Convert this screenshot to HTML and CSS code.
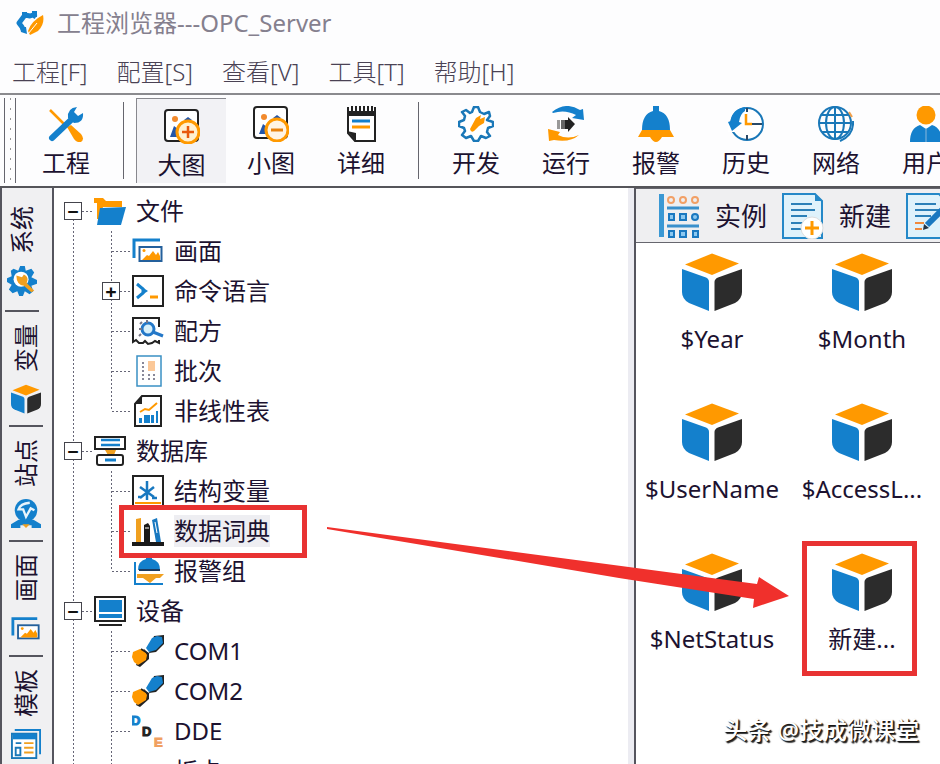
FILE: index.html
```html
<!DOCTYPE html>
<html lang="zh-CN">
<head>
    <meta charset="UTF-8">
    <meta name="viewport" content="width=device-width, initial-scale=1.0">
    <title>工程浏览器---OPC_Server</title>
    <link rel="stylesheet" href="styles.css">
</head>
<body>
    <!-- 图标定义 -->
    <svg class="defs" aria-hidden="true">
        <symbol id="cube" viewBox="0 0 60 58">
            <path fill="#f90" d="M30 0.500 57 10.500 30 22 3 11.500Z"/>
            <path fill="#1480cc" d="M0 16 24 24.500Q27 26 27 29V58L7 50Q0 46 0 39Z"/>
            <path fill="#2c2c2c" d="M60 16 36 24.500Q32.500 26 32.500 29V58L53 50Q60 46 60 39Z"/>
        </symbol>
        <symbol id="pictures" viewBox="0 0 32 32">
            <path fill="none" stroke="#1480cc" stroke-width="3" d="M2 23V5H28"/>
            <rect x="7.500" y="12" width="22" height="14" fill="#fff" stroke="#24609c" stroke-width="2"/>
            <path fill="#f90" d="M10 25 15 20 17 21 21 16 24 20 26 17 28 21V25Z"/>
            <circle cx="12" cy="15.500" r="1.500" fill="#f90"/>
        </symbol>
        <symbol id="com" viewBox="0 0 32 32">
            <path fill="#222" d="M22 1 32 0 32 9 24 17 17 18Z"/>
            <path fill="#1480cc" d="M20 3 25 1 30 2 31 8 24 15 17 17 14 13Z"/>
            <path fill="#222" d="M12 14 17 19V24L8 32 4 30Z"/>
            <path fill="#f90" d="M1 17 8 14 12 15 15 20 14 25 6 30 2 27 0 22Z"/>
            <path stroke="#222" stroke-width="1.500" d="M9 14 17 19"/>
        </symbol>
    </svg>

    <header class="title-bar">
        <svg class="logo" viewBox="0 0 28 24" aria-hidden="true">
            <path fill="none" stroke="#1480cc" stroke-width="5" stroke-linejoin="round" d="M20 6 17 4 14 5 9 4 6 8 3 12 6 16 8 20"/>
            <path fill="#1480cc" d="M6 1H11V5H6ZM16 0H21V6H16ZM4 16 10 16 11 23 5 21Z"/>
            <path fill="#f90" d="M27 4Q29 13 22 20L14 24 12 20Q15 10 27 4Z"/>
            <path stroke="#fff" d="M12 23 21 12"/>
        </svg>
        <h1 class="title">工程浏览器---OPC_Server</h1>
    </header>

    <nav class="menu">
        <button class="menu-item">工程[F]</button>
        <button class="menu-item">配置[S]</button>
        <button class="menu-item">查看[V]</button>
        <button class="menu-item">工具[T]</button>
        <button class="menu-item">帮助[H]</button>
    </nav>

    <!-- 工具栏 -->
    <div class="toolbar">
        <span class="grip"></span>
        <button class="tool">
            <svg class="tool-icon" viewBox="0 0 36 36" aria-hidden="true">
                <path stroke="#f90" stroke-width="2.500" d="M2 4 18 20"/>
                <path fill="#f90" d="M19 21 23 19 33 28Q37 33 33 36Q29 37 26 33Z"/>
                <path fill="none" stroke="#1480cc" stroke-width="6" stroke-linecap="round" d="M4 32 24 13"/>
                <path fill="#1480cc" d="M20 12Q19 2 29 1L26 6 30 10 35 7Q36 17 26 17Z"/>
            </svg>
            <span>工程</span>
        </button>
        <span class="separator"></span>
        <button class="tool pressed">
            <svg class="tool-icon" viewBox="0 0 36 36" aria-hidden="true">
                <rect x="1" y="2" width="33" height="31" rx="3" fill="#fff" stroke="#222" stroke-width="2"/>
                <circle cx="11" cy="11" r="3" fill="#f28a2c"/>
                <path fill="#2456a8" d="M6 29 10 18 14 21 13 29ZM20 12 24 9 28 12Z"/>
                <circle cx="24" cy="24" r="11" fill="#fff0d0" stroke="#f90" stroke-width="3"/>
                <path stroke="#e8590c" stroke-width="2.500" d="M24 18V30M18 24H30"/>
            </svg>
            <span>大图</span>
        </button>
        <button class="tool">
            <svg class="tool-icon" viewBox="0 0 36 36" aria-hidden="true">
                <rect x="1" y="1" width="33" height="31" rx="3" fill="#fff" stroke="#222" stroke-width="2"/>
                <circle cx="11" cy="11" r="3" fill="#f28a2c"/>
                <path fill="#2456a8" d="M6 28 10 18 14 21 13 28ZM20 12 24 9 28 12Z"/>
                <circle cx="24" cy="24" r="11" fill="#fff4e4" stroke="#f90" stroke-width="3"/>
                <path stroke="#e8820c" stroke-width="3" d="M18 24H30"/>
            </svg>
            <span>小图</span>
        </button>
        <button class="tool">
            <svg class="tool-icon" viewBox="0 0 36 36" aria-hidden="true">
                <path fill="#fff" stroke="#222" stroke-width="2" d="M5 8V27L12 35H32V8Z"/>
                <path fill="#222" d="M4 5H33V10H4ZM4 25 13 27V35Z"/>
                <path stroke="#222" stroke-width="2" d="M5 1V6M9 0V6M13 0V6M17 0V6M21 0V6M25 0V6M29 0V6M32 1V6"/>
                <path stroke="#1480cc" stroke-width="3" d="M9 15H27"/>
                <path stroke="#f90" stroke-width="3" d="M9 21H27"/>
            </svg>
            <span>详细</span>
        </button>
        <span class="separator"></span>
        <button class="tool">
            <svg class="tool-icon" viewBox="0 0 36 36" aria-hidden="true">
                <path fill="#fff" stroke="#1a78b8" stroke-width="2.500" stroke-linejoin="round" d="M14 6 16 1H20L22 6 26 8 31 6 32 10 29 14 35 16V20L30 22 29 26 32 30 28 32 23 30 20 35H16L13 30 8 32 4 29 7 25 6 22 1 20V16L6 14 7 10 4 6 8 4 12 7Z"/>
                <path fill="#f90" d="M18 12 23 9 22 13 27 11 26 17 21 20 16 25Q13 27 12 23Z"/>
            </svg>
            <span>开发</span>
        </button>
        <button class="tool">
            <svg class="tool-icon" viewBox="0 0 36 36" aria-hidden="true">
                <path fill="#1480cc" d="M4 6Q18-5 32 4L35 3 36 14 24 12 28 9Q17 3 5 7Z"/>
                <path fill="#f90" d="M0 23 12 26 10 29Q20 34 31 29 22 37 6 34L1 35Z"/>
                <path fill="#999" d="M9 14H12V23H9Z"/>
                <path fill="#666" d="M13 14H17V23H13Z"/>
                <path fill="#222" d="M17 14H20V11L27 18 20 26V23H17Z"/>
            </svg>
            <span>运行</span>
        </button>
        <button class="tool">
            <svg class="tool-icon" viewBox="0 0 36 36" aria-hidden="true">
                <path fill="#1480cc" d="M15 0H21V5Q32 8 32 24H4Q4 8 15 5Z"/>
                <path fill="#f90" d="M4 24H32L36 31H24Q18 41 12 31H0Z"/>
            </svg>
            <span>报警</span>
        </button>
        <button class="tool">
            <svg class="tool-icon" viewBox="0 0 36 36" aria-hidden="true">
                <circle cx="19" cy="18" r="16" fill="#fff" stroke="#1a78b8" stroke-width="2"/>
                <path fill="#fff" d="M0 19H8V26H0Z"/>
                <path fill="#1480cc" d="M17 1Q4 3 3 15L0 16 4 25 14 17 11 16Q12 8 17 5Z"/>
                <path fill="none" stroke="#f90" stroke-width="2.500" d="M18 8V18H24"/>
                <path stroke="#2a4a68" stroke-width="2" d="M24 18H34M19 29V34M19 2V6"/>
            </svg>
            <span>历史</span>
        </button>
        <button class="tool">
            <svg class="tool-icon" viewBox="0 0 36 36" aria-hidden="true">
                <g fill="none" stroke="#1a78b8" stroke-width="2">
                    <circle cx="17" cy="17" r="16"/>
                    <ellipse cx="17" cy="17" rx="9" ry="16"/>
                    <path d="M17 1V33M1 17H33M4 9H30M4 26H30M35 15Q36 29 22 35"/>
                </g>
                <path fill="none" stroke="#f2a04a" stroke-width="2" d="M31 6 34 11"/>
            </svg>
            <span>网络</span>
        </button>
        <button class="tool">
            <svg class="tool-icon" viewBox="0 0 36 36" aria-hidden="true">
                <circle cx="18" cy="9" r="9.500" fill="#f90"/>
                <path fill="#1480cc" d="M2 36Q2 22 12 19L18 23 24 19Q34 22 34 36Z"/>
                <path stroke="#8ab8dc" d="M18 22V36"/>
            </svg>
            <span>用户</span>
        </button>
    </div>

    <div class="workspace">
        <!-- 左侧竖排标签 -->
        <nav class="side-tabs">
            <button class="side-tab">
                <span class="side-label">系统</span>
                <svg class="side-icon" viewBox="0 0 32 32" aria-hidden="true">
                    <path fill="#1480cc" d="M12 5 14 0H19L20 5 26 3 29 7 26 12 32 15V19L26 21 28 27 24 30 19 27 17 32H13L11 27 6 29 2 25 5 20 0 17V13L5 11 4 5 7 3Z"/>
                    <circle cx="15" cy="14" r="8" fill="#fff"/>
                    <path fill="#f0a020" d="M10 10 16 12 18 9Q24 12 21 18L29 26 26 28 18 21Q10 20 10 10Z"/>
                </svg>
            </button>
            <button class="side-tab">
                <span class="side-label">变量</span>
                <svg class="side-icon" aria-hidden="true"><use href="#cube"/></svg>
            </button>
            <button class="side-tab">
                <span class="side-label">站点</span>
                <svg class="side-icon" viewBox="0 0 32 32" aria-hidden="true">
                    <path fill="#1480cc" d="M0 31V27L8 22H24L32 27V31H22V28H10V31Z"/>
                    <circle cx="16" cy="12" r="12" fill="#1480cc"/>
                    <path fill="none" stroke="#e8f4fc" stroke-width="2.500" d="M20 4Q10 5 8 11L13 11 16 19 21 10 25 12"/>
                    <path fill="#f0a020" d="M12 27H20L16 31Z"/>
                </svg>
            </button>
            <button class="side-tab">
                <span class="side-label">画面</span>
                <svg class="side-icon" aria-hidden="true"><use href="#pictures"/></svg>
            </button>
            <button class="side-tab">
                <span class="side-label">模板</span>
                <svg class="side-icon" viewBox="0 0 32 32" aria-hidden="true">
                    <path fill="none" stroke="#1480cc" stroke-width="2" d="M4 1H31V27"/>
                    <rect x="1" y="5" width="26" height="26" fill="#fff" stroke="#1a78b8" stroke-width="2"/>
                    <path fill="#1480cc" d="M2 5H27V11H2Z"/>
                    <path fill="none" stroke="#1a78b8" stroke-width="2" d="M5 20H10V28H5ZM5 15H11"/>
                    <path stroke="#f0a020" stroke-width="2" d="M14 15H24M14 20H24M14 25H24"/>
                </svg>
            </button>
        </nav>

        <!-- 工程树 -->
        <div class="tree-panel">
            <ul class="tree">
                <li>
                    <div class="node">
                        <button class="expander" aria-label="折叠文件">−</button>
                        <span class="dots"></span>
                        <svg class="node-icon" viewBox="0 0 32 32" aria-hidden="true">
                            <path fill="#f90" d="M0 3H9L12 6H28V12H9L5 24H3V8H0Z"/>
                            <path fill="#1480cc" d="M6 13 32 12 27 30H3Z"/>
                        </svg>
                        <span class="node-label">文件</span>
                    </div>
                    <ul class="branch">
                        <li class="node">
                            <span class="dots long"></span>
                            <svg class="node-icon" aria-hidden="true"><use href="#pictures"/></svg>
                            <span class="node-label">画面</span>
                        </li>
                        <li class="node">
                            <button class="expander" aria-label="展开命令语言">+</button>
                            <span class="dots"></span>
                            <svg class="node-icon" viewBox="0 0 32 32" aria-hidden="true">
                                <rect x="1" y="1" width="30" height="30" fill="#fff" stroke="#222" stroke-width="2"/>
                                <path fill="none" stroke="#1480cc" stroke-width="3" d="M5 9 11 14V18L5 23"/>
                                <path fill="#1480cc" d="M10 12 16 16 10 20Z"/>
                                <path stroke="#f90" stroke-width="3" d="M18 22H26"/>
                            </svg>
                            <span class="node-label">命令语言</span>
                        </li>
                        <li class="node">
                            <span class="dots long"></span>
                            <svg class="node-icon" viewBox="0 0 32 32" aria-hidden="true">
                                <path fill="none" stroke="#222" stroke-width="2" d="M27 12V3H1V27L4 25 7 28 11 28 13 26 16 29 20 28 23 26 27 28V25"/>
                                <circle cx="16" cy="14" r="6" fill="#d8f0fa" stroke="#2478c8" stroke-width="3"/>
                                <path stroke="#2478c8" stroke-width="3" d="M21 17 31 21"/>
                                <path stroke="#778" stroke-width="2" d="M10 7 8 9M9 19 7 21M7 14H10M15 5V8"/>
                            </svg>
                            <span class="node-label">配方</span>
                        </li>
                        <li class="node">
                            <span class="dots long"></span>
                            <svg class="node-icon" viewBox="0 0 32 32" aria-hidden="true">
                                <rect x="5" y="1" width="24" height="30" fill="#fff" stroke="#3a90c4" stroke-width="1.500"/>
                                <path fill="#fbc898" d="M16 6H23V16H16Z"/>
                                <path stroke="#889" stroke-width="2" stroke-dasharray="2 2" d="M11 7V26M17 19V26M22 19V26"/>
                            </svg>
                            <span class="node-label">批次</span>
                        </li>
                        <li class="node">
                            <span class="dots long"></span>
                            <svg class="node-icon" viewBox="0 0 32 32" aria-hidden="true">
                                <path fill="#fff" stroke="#222" stroke-width="2" d="M10 1H29V31H3V9Z"/>
                                <path fill="#222" d="M10 1V9H3Z"/>
                                <path fill="none" stroke="#f90" stroke-width="2" d="M8 17 13 14 17 15 25 8"/>
                                <path fill="#1480cc" d="M7 23H10V28H7ZM12 20H18V28H12ZM19 20H22V28H19ZM24 16H26V28H24Z"/>
                            </svg>
                            <span class="node-label">非线性表</span>
                        </li>
                    </ul>
                </li>
                <li>
                    <div class="node">
                        <button class="expander" aria-label="折叠数据库">−</button>
                        <span class="dots"></span>
                        <svg class="node-icon" viewBox="0 0 32 32" aria-hidden="true">
                            <rect x="1" y="2" width="30" height="12" fill="#fff" stroke="#222" stroke-width="2"/>
                            <path stroke="#1480cc" stroke-width="2.500" d="M7 5H26M7 10H26"/>
                            <path fill="#f0a020" d="M11 15H22L20 20H14Z"/>
                            <rect x="3" y="20" width="26" height="10" rx="2" fill="#fff" stroke="#222" stroke-width="2"/>
                            <path stroke="#1480cc" stroke-width="3" d="M11 25H22"/>
                        </svg>
                        <span class="node-label">数据库</span>
                    </div>
                    <ul class="branch">
                        <li class="node">
                            <span class="dots long"></span>
                            <svg class="node-icon" viewBox="0 0 32 32" aria-hidden="true">
                                <rect x="1" y="1" width="30" height="30" fill="#fff" stroke="#222" stroke-width="2"/>
                                <path fill="none" stroke="#1878c0" stroke-width="2.500" d="M15 6V25M8 12 22 22M22 12 8 23M6 22H10M20 23H25"/>
                                <path stroke="#f90" stroke-width="2" d="M3 28H29"/>
                            </svg>
                            <span class="node-label">结构变量</span>
                        </li>
                        <li class="node marked">
                            <span class="dots long"></span>
                            <svg class="node-icon" viewBox="0 0 32 32" aria-hidden="true">
                                <path fill="#f0a020" d="M4 4 9 3V27H4Z"/>
                                <path fill="#1a1a1a" d="M12 10 16 8 18 11V27H12ZM0 27H32V31H0Z"/>
                                <path fill="#1878c0" d="M20 5 25 3 29 27H24Z"/>
                                <path stroke="#fff" d="M13 13H17M23 7 25 18"/>
                            </svg>
                            <span class="node-label selected">数据词典</span>
                        </li>
                        <li class="node">
                            <span class="dots long"></span>
                            <svg class="node-icon" viewBox="0 0 32 32" aria-hidden="true">
                                <path fill="#1480cc" d="M14 1H20V4Q28 6 28 15H6Q6 6 14 4Z"/>
                                <path stroke="#1a3a60" stroke-width="2" d="M7 15H28"/>
                                <path fill="#f0a020" d="M5 19H32L28 23H24L18 28 11 23H5Z"/>
                                <path fill="none" stroke="#1480cc" stroke-width="2" d="M3 7V29H31"/>
                            </svg>
                            <span class="node-label">报警组</span>
                        </li>
                    </ul>
                </li>
                <li>
                    <div class="node">
                        <button class="expander" aria-label="折叠设备">−</button>
                        <span class="dots"></span>
                        <svg class="node-icon" viewBox="0 0 32 32" aria-hidden="true">
                            <rect x="1" y="2" width="30" height="24" fill="#fff" stroke="#222" stroke-width="2"/>
                            <path fill="#1480cc" d="M5 5H28V17H5ZM5 19H28V23H5Z"/>
                            <path stroke="#222" stroke-width="2" d="M5 30H28"/>
                        </svg>
                        <span class="node-label">设备</span>
                    </div>
                    <ul class="branch open">
                        <li class="node">
                            <span class="dots long"></span>
                            <svg class="node-icon" aria-hidden="true"><use href="#com"/></svg>
                            <span class="node-label">COM1</span>
                        </li>
                        <li class="node">
                            <span class="dots long"></span>
                            <svg class="node-icon" aria-hidden="true"><use href="#com"/></svg>
                            <span class="node-label">COM2</span>
                        </li>
                        <li class="node">
                            <span class="dots long"></span>
                            <svg class="node-icon" viewBox="0 0 32 32" aria-hidden="true">
                                <g class="dde">
                                    <text x="-1" y="10" fill="#1480cc" stroke="#1480cc">D</text>
                                    <text x="10" y="21" fill="#222" stroke="#222">D</text>
                                    <text x="22" y="32" fill="#f0a060" stroke="#f0a060">E</text>
                                </g>
                            </svg>
                            <span class="node-label">DDE</span>
                        </li>
                        <li class="node">
                            <span class="dots long"></span>
                            <span class="node-icon"></span>
                            <span class="node-label">板卡</span>
                        </li>
                    </ul>
                </li>
            </ul>
        </div>

        <!-- 变量列表 -->
        <main class="content">
            <div class="content-bar">
                <button class="bar-button">
                    <svg class="bar-icon" viewBox="0 0 42 46" aria-hidden="true">
                        <path fill="#3a98d4" d="M1 1H6V44H1Z"/>
                        <g fill="none" stroke="#f2a066" stroke-width="2">
                            <circle cx="13" cy="7" r="3"/><circle cx="25" cy="7" r="3"/><circle cx="37" cy="7" r="3"/>
                        </g>
                        <path stroke="#3a90cc" stroke-width="3" d="M9 15H41M9 33H41"/>
                        <g fill="#8cc8f0" stroke="#1a78c0" stroke-width="2">
                            <path d="M11 21H16V27H11ZM22 21H28V27H22ZM11 38H16V44H11ZM22 38H28V44H22ZM35 38H40V44H35Z"/>
                            <circle cx="37" cy="24" r="3"/>
                        </g>
                    </svg>
                    <span>实例</span>
                </button>
                <button class="bar-button">
                    <svg class="bar-icon" viewBox="0 0 42 46" aria-hidden="true">
                        <path fill="#dff2fb" stroke="#2488c8" stroke-width="2" d="M1 1H33L40 8V45H1Z"/>
                        <path fill="#2488c8" d="M33 1 40 8H33Z"/>
                        <path stroke="#2c80b8" stroke-width="2" d="M9 11H30M9 17H33M9 23H25M9 30H21M9 36H21"/>
                        <circle cx="30" cy="35" r="11" fill="#fff" stroke="#ddd"/>
                        <path stroke="#f90" stroke-width="3" d="M30 28V42M23 35H37"/>
                    </svg>
                    <span>新建</span>
                </button>
                <button class="bar-button">
                    <svg class="bar-icon" viewBox="0 0 42 46" aria-hidden="true">
                        <path fill="#dff2fb" stroke="#2488c8" stroke-width="2" d="M1 1H33L40 8V45H1Z"/>
                        <path stroke="#2c80b8" stroke-width="2" d="M9 11H30M9 17H33M9 23H25"/>
                        <path stroke="#f08a3c" stroke-width="2" d="M9 30H18M9 36H16"/>
                        <path stroke="#1a78c0" stroke-width="6" d="M21 32 40 13"/>
                        <path fill="#234" d="M17 37 18 31 23 35Z"/>
                    </svg>
                </button>
            </div>
            <div class="variables">
                <button class="variable"><svg class="cube" aria-hidden="true"><use href="#cube"/></svg><span>$Year</span></button>
                <button class="variable"><svg class="cube" aria-hidden="true"><use href="#cube"/></svg><span>$Month</span></button>
                <button class="variable"><svg class="cube" aria-hidden="true"><use href="#cube"/></svg><span>$UserName</span></button>
                <button class="variable"><svg class="cube" aria-hidden="true"><use href="#cube"/></svg><span>$AccessL...</span></button>
                <button class="variable"><svg class="cube" aria-hidden="true"><use href="#cube"/></svg><span>$NetStatus</span></button>
                <button class="variable marked"><svg class="cube" aria-hidden="true"><use href="#cube"/></svg><span>新建...</span></button>
            </div>
        </main>

        <!-- 标注箭头 -->
        <svg class="arrow" viewBox="0 0 462 82" aria-hidden="true">
            <path fill="#f0302c" d="M0 0 430 57 432 50 462 69 426 81 427 72 292 51 0 2Z"/>
        </svg>
        <p class="watermark">头条 @技成微课堂</p>
    </div>
</body>
</html>
```

FILE: styles.css
```css
*,
*::after {
    box-sizing: border-box;
}

body {
    display: flex;
    flex-direction: column;
    height: 100vh;
    margin: 0;
    overflow: hidden;
    background: #fdfdfe;
    color: #1c1230;
    font-family: "Noto Sans", "Noto Sans CJK SC", sans-serif;
    font-size: 24px;
    line-height: 32px;
}

button {
    flex-shrink: 0;
    margin: 0;
    padding: 0;
    border: none;
    background: none;
    color: inherit;
    font: inherit;
    cursor: pointer;
}

svg {
    display: block;
    flex-shrink: 0;
}

ul {
    margin: 0;
    padding: 0;
    list-style: none;
}

.defs {
    position: absolute;
    width: 0;
    height: 0;
}

/* 标题与菜单 */
.title-bar {
    display: flex;
    align-items: center;
    gap: 13px;
    height: 46px;
    padding-left: 16px;
    flex-shrink: 0;
}

.logo {
    width: 28px;
    height: 24px;
}

.title {
    margin: 0;
    color: #85808e;
    font-size: 24px;
    font-weight: 400;
}

.menu {
    display: flex;
    align-items: center;
    gap: 29px;
    height: 49px;
    padding: 4px 12px 0;
    border-bottom: 2px solid #8a8a8e;
    color: #4a4254;
    font-weight: 300;
    flex-shrink: 0;
}

/* 工具栏 */
.toolbar {
    display: flex;
    align-items: stretch;
    height: 93px;
    padding: 3px 0 3px 4px;
    border-bottom: 2px solid #55555a;
    flex-shrink: 0;
}

.grip {
    width: 12px;
    margin-right: 5px;
    border: solid #66666e;
    border-width: 0 1px;
    background: repeating-linear-gradient(#999 0 2px, transparent 2px 10px) 5px 0 / 1px 100% no-repeat;
    flex-shrink: 0;
}

.separator {
    width: 1px;
    margin: 4px 12px 4px 12px;
    background: #66666e;
    flex-shrink: 0;
}

.tool {
    display: flex;
    flex-direction: column;
    align-items: center;
    gap: 5px;
    width: 90px;
    padding-top: 8px;
}

.tool-icon {
    width: 36px;
    height: 36px;
}

.pressed {
    padding-top: 9px;
    border: solid #88888e;
    border-width: 1px 0 0 1px;
    background: #f2f2f5;
}

.workspace {
    position: relative;
    display: flex;
    flex: 1;
    min-height: 0;
}

/* 左侧标签 */
.side-tabs {
    width: 54px;
    border: solid #55555e;
    border-width: 0 2px;
    background: #f0f0f2;
    overflow: hidden;
    flex-shrink: 0;
}

.side-tab {
    display: flex;
    flex-direction: column;
    align-items: center;
    gap: 12px;
    width: 34px;
    height: 115px;
    margin-left: 7px;
    padding-top: 12px;
    border-bottom: 2px solid #55555e;
}

.side-tab:first-child {
    height: 124px;
    margin-left: 3px;
    padding-top: 18px;
}

.side-label {
    writing-mode: vertical-rl;
    text-orientation: sideways;
    transform: rotate(180deg);
}

.side-icon {
    width: 30px;
    height: 30px;
}

/* 工程树 */
.tree-panel {
    flex: 1;
    padding: 3px 0 0 10px;
    background: #fff;
    overflow: hidden;
    min-width: 0;
}

.tree {
    background: repeating-linear-gradient(#667 0 2px, transparent 2px 4px) 9px 20px / 1px 100% no-repeat;
}

.branch {
    margin-left: 38px;
    background: repeating-linear-gradient(#667 0 2px, transparent 2px 4px) 9px 0 / 1px calc(100% - 20px) no-repeat;
}

.branch.open {
    background-size: 1px 100%;
}

.node {
    display: flex;
    align-items: center;
    height: 40px;
}

.expander {
    width: 18px;
    height: 18px;
    border: 1px solid #44444c;
    background: #fff;
    color: #111;
    font-size: 20px;
    font-weight: 700;
    line-height: 15px;
}

.dots {
    width: 12px;
    height: 1px;
    background: repeating-linear-gradient(90deg, #667 0 2px, transparent 2px 4px);
    flex-shrink: 0;
}

.dots.long {
    width: 20px;
    margin-left: 10px;
}

.node-icon {
    width: 32px;
    height: 32px;
    flex-shrink: 0;
}

.node-label {
    margin-left: 10px;
}

.selected {
    background: #eeeef2;
}

.dde {
    font-family: "Liberation Sans", sans-serif;
    font-size: 13px;
    font-weight: 700;
}

/* 红色标注框 */
.marked {
    position: relative;
}

.marked::after {
    content: "";
    position: absolute;
    border: 5px solid #e83232;
    pointer-events: none;
}

.node.marked::after {
    left: 17px;
    top: -6px;
    width: 188px;
    height: 53px;
}

/* 右侧内容 */
.content {
    width: 33%;
    min-width: 312px;
    border-left: 6px solid #ececf2;
    background: #fff;
    box-shadow: inset 2px 0 #55555e;
    overflow: hidden;
    flex-shrink: 0;
}

.content-bar {
    display: flex;
    align-items: center;
    gap: 15px;
    height: 55px;
    margin-left: 2px;
    padding-left: 22px;
    border: solid #66666e;
    border-width: 1px 0;
    background: #efeff1;
    font-size: 26px;
}

.bar-button {
    display: flex;
    align-items: center;
    gap: 15px;
}

.bar-icon {
    width: 42px;
    height: 46px;
}

.variables {
    display: grid;
    grid-template-columns: repeat(auto-fill, 150px);
    padding-left: 3px;
}

.variable {
    display: flex;
    flex-direction: column;
    align-items: center;
    gap: 12px;
    height: 150px;
    padding-top: 10px;
}

.cube {
    width: 60px;
    height: 58px;
}

.variable.marked::after {
    left: 15px;
    top: -2px;
    width: 115px;
    height: 135px;
}

.arrow {
    position: absolute;
    right: 151px;
    top: 339px;
    width: 462px;
    height: 82px;
}

.watermark {
    position: absolute;
    right: 21px;
    bottom: 18px;
    margin: 0;
    color: #fff;
    font-weight: 500;
    text-shadow: 1px 1px 1px #111, 2px 2px 1px #333;
}
```
